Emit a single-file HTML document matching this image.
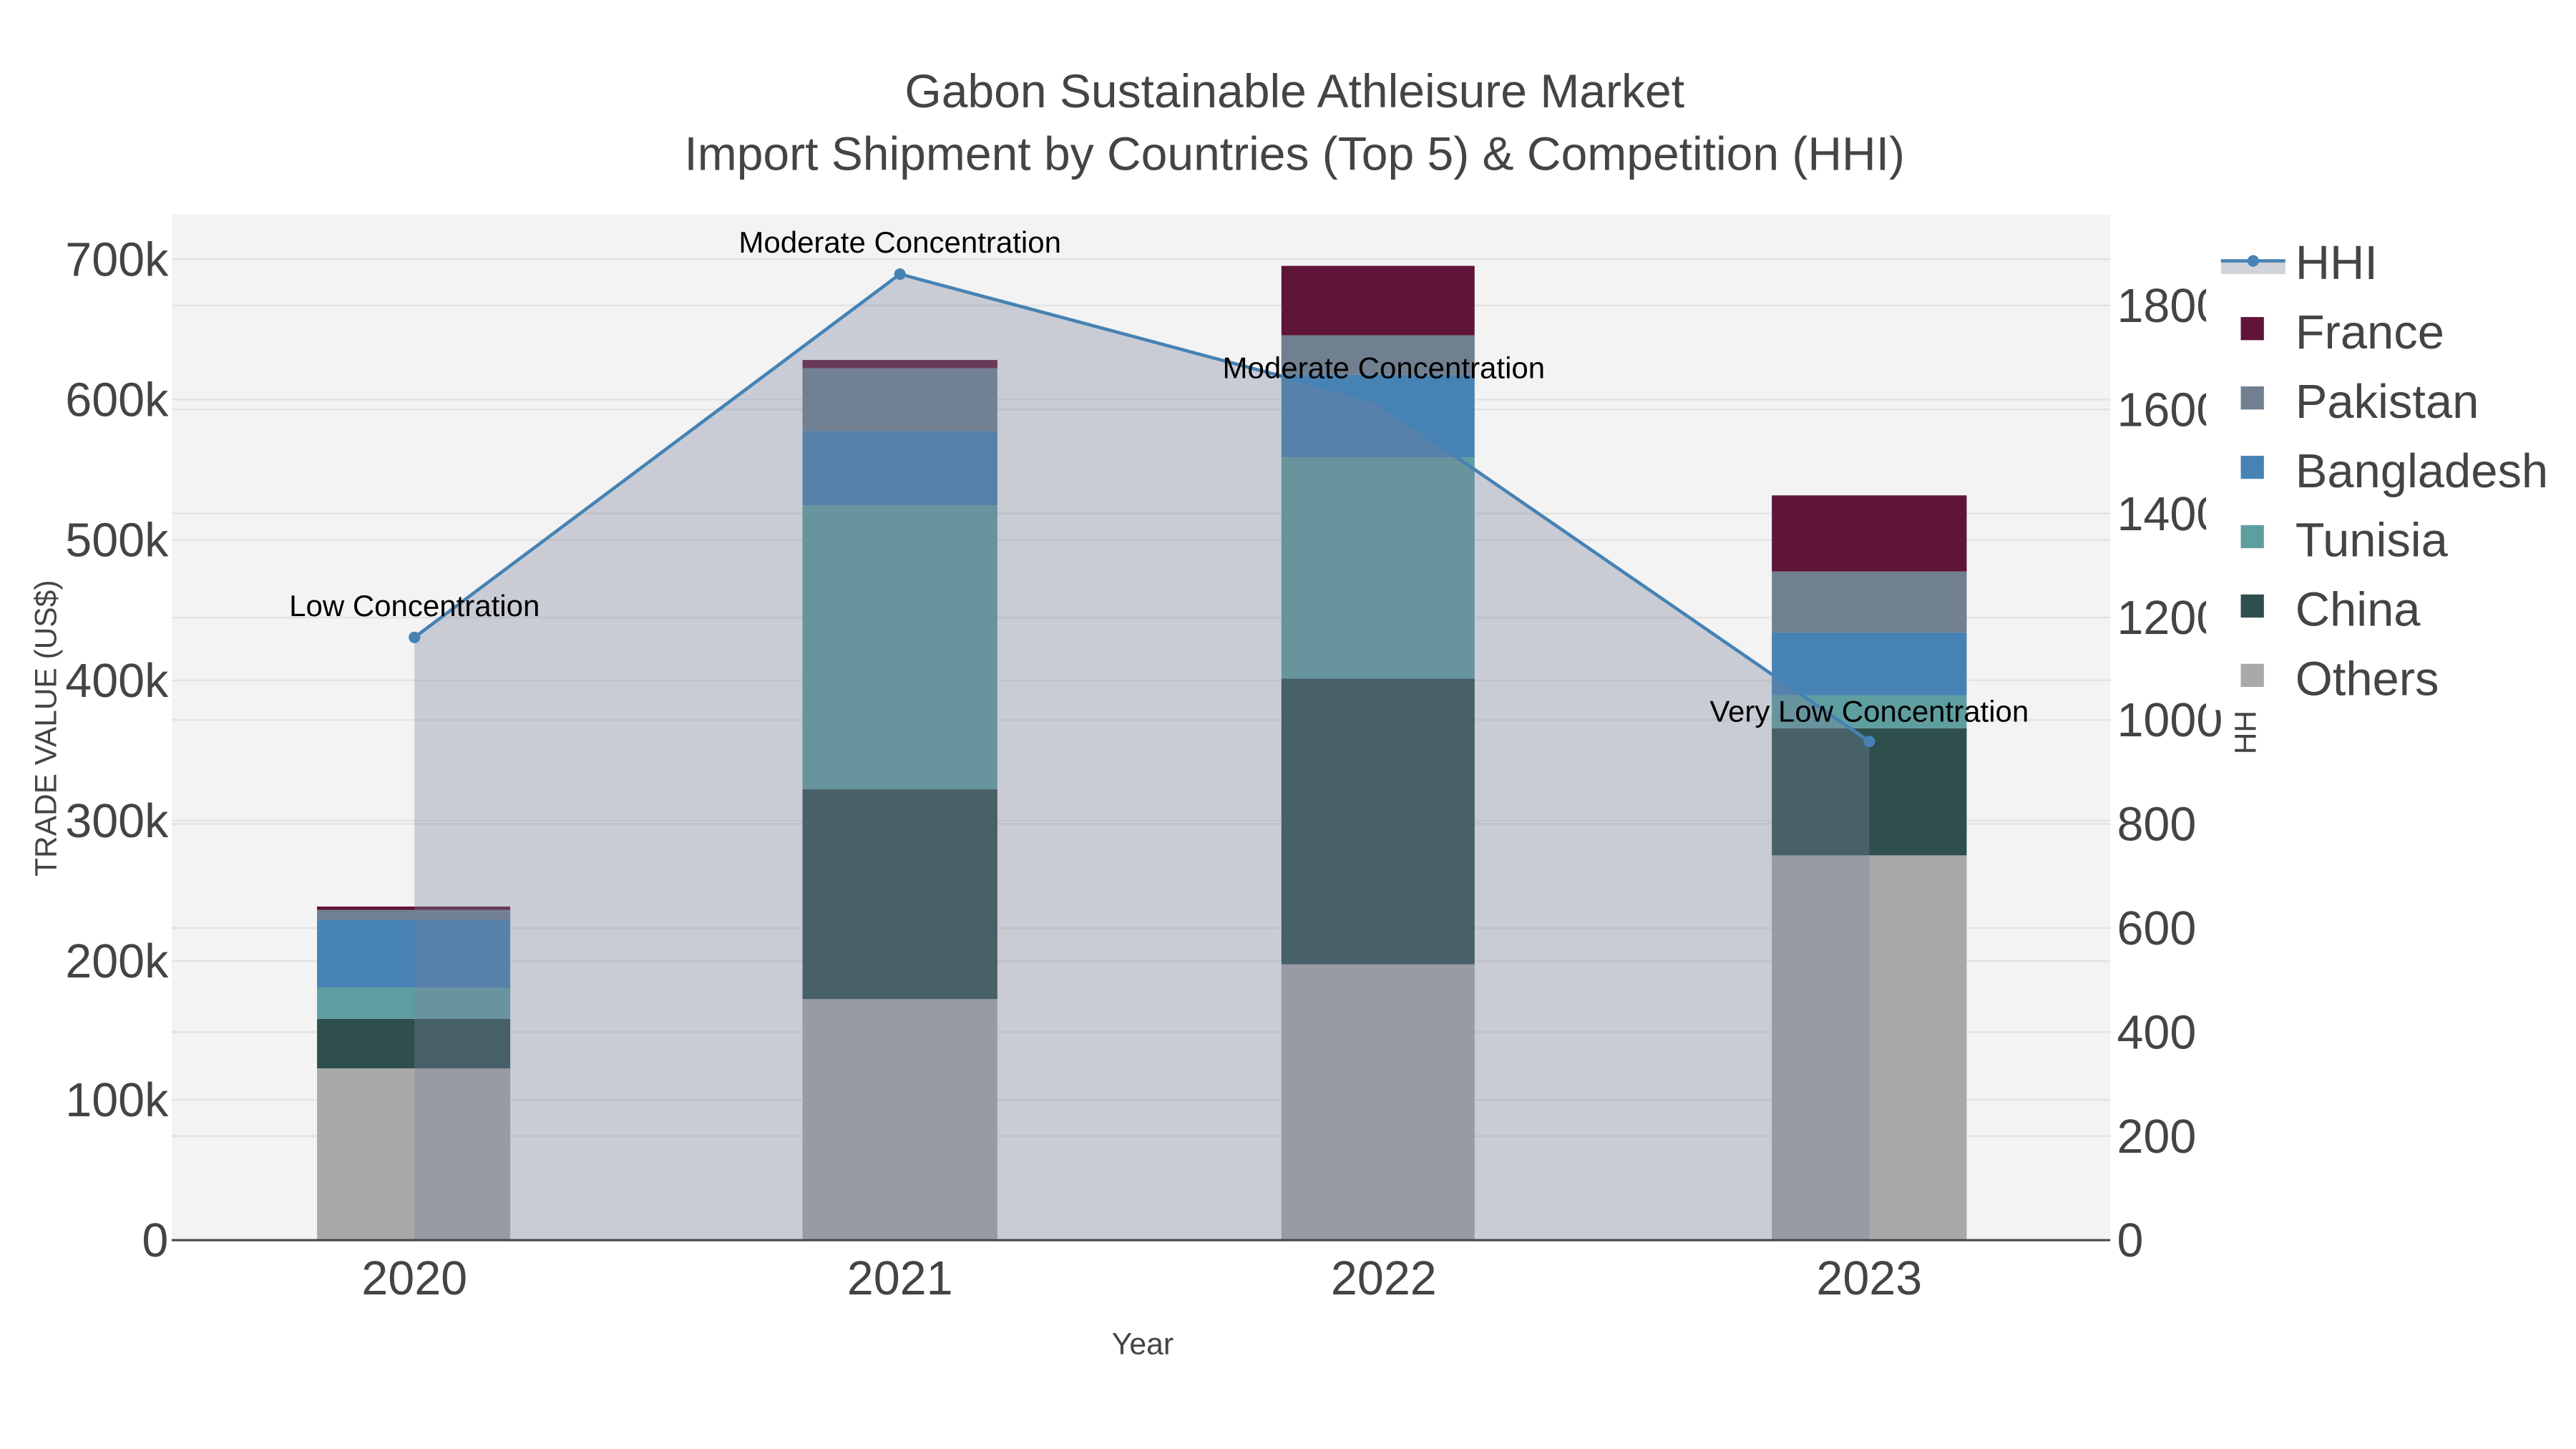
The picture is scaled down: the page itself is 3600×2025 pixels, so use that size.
<!DOCTYPE html>
<html><head><meta charset="utf-8"><style>
html,body{margin:0;padding:0;background:#fff;}
svg{display:block;}
text{font-family:"Liberation Sans",Arial,sans-serif;}
</style></head><body>
<svg width="3600" height="2025" viewBox="0 0 1560 877.5" xmlns="http://www.w3.org/2000/svg">
<rect width="1560" height="877.5" fill="#fff"/>
<rect x="104" y="130" width="1174" height="621" fill="#f3f3f3"/>
<g stroke="#e2e2e2" stroke-width="1">
<line x1="104" x2="1278" y1="666" y2="666"/><line x1="104" x2="1278" y1="582" y2="582"/>
<line x1="104" x2="1278" y1="497" y2="497"/><line x1="104" x2="1278" y1="412" y2="412"/>
<line x1="104" x2="1278" y1="327" y2="327"/><line x1="104" x2="1278" y1="242" y2="242"/>
<line x1="104" x2="1278" y1="157" y2="157"/>
<line x1="104" x2="1278" y1="688" y2="688"/><line x1="104" x2="1278" y1="625" y2="625"/>
<line x1="104" x2="1278" y1="562" y2="562"/><line x1="104" x2="1278" y1="499" y2="499"/>
<line x1="104" x2="1278" y1="436" y2="436"/><line x1="104" x2="1278" y1="374" y2="374"/>
<line x1="104" x2="1278" y1="311" y2="311"/><line x1="104" x2="1278" y1="248" y2="248"/>
<line x1="104" x2="1278" y1="185" y2="185"/>
</g>
<g>
<rect x="192" y="647" width="117" height="104" fill="#a9a9a9"/>
<rect x="192" y="617" width="117" height="30" fill="#2f4f4f"/>
<rect x="192" y="598" width="117" height="19" fill="#5f9ea0"/>
<rect x="192" y="557" width="117" height="41" fill="#4682b4"/>
<rect x="192" y="551" width="117" height="6" fill="#708090"/>
<rect x="192" y="549" width="117" height="2" fill="#601437"/>

<rect x="486" y="605" width="118" height="146" fill="#a9a9a9"/>
<rect x="486" y="478" width="118" height="127" fill="#2f4f4f"/>
<rect x="486" y="306" width="118" height="172" fill="#5f9ea0"/>
<rect x="486" y="261" width="118" height="45" fill="#4682b4"/>
<rect x="486" y="223" width="118" height="38" fill="#708090"/>
<rect x="486" y="218" width="118" height="5" fill="#601437"/>

<rect x="776" y="584" width="117" height="167" fill="#a9a9a9"/>
<rect x="776" y="411" width="117" height="173" fill="#2f4f4f"/>
<rect x="776" y="277" width="117" height="134" fill="#5f9ea0"/>
<rect x="776" y="227" width="117" height="50" fill="#4682b4"/>
<rect x="776" y="203" width="117" height="24" fill="#708090"/>
<rect x="776" y="161" width="117" height="42" fill="#601437"/>

<rect x="1073" y="518" width="118" height="233" fill="#a9a9a9"/>
<rect x="1073" y="441" width="118" height="77" fill="#2f4f4f"/>
<rect x="1073" y="421" width="118" height="20" fill="#5f9ea0"/>
<rect x="1073" y="383" width="118" height="38" fill="#4682b4"/>
<rect x="1073" y="346" width="118" height="37" fill="#708090"/>
<rect x="1073" y="300" width="118" height="46" fill="#601437"/>
</g>
<polygon points="251,751 251,386 545,166 833,243 1132,449 1132,751" fill="rgba(119,130,151,0.34)"/>
<polyline points="251,386 545,166 833,243 1132,449" fill="none" stroke="#4682b4" stroke-width="2"/>
<g fill="#4682b4"><circle cx="251" cy="386" r="3.5"/><circle cx="545" cy="166" r="3.5"/><circle cx="1132" cy="449" r="3.5"/></g>
<line x1="104" x2="1278" y1="751" y2="751" stroke="#444" stroke-width="1.3"/>
<g font-size="18.2" fill="#000" text-anchor="middle">
<text x="251" y="373">Low Concentration</text>
<text x="545" y="153">Moderate Concentration</text>
<text x="838" y="229">Moderate Concentration</text>
<text x="1132" y="437">Very Low Concentration</text>
</g>
<g font-size="28.8" fill="#444" text-anchor="end">
<text x="102" y="761">0</text><text x="102" y="676">100k</text><text x="102" y="592">200k</text>
<text x="102" y="507">300k</text><text x="102" y="422">400k</text><text x="102" y="337">500k</text>
<text x="102" y="252">600k</text><text x="102" y="167">700k</text>
</g>
<g font-size="28.8" fill="#444">
<text x="1282" y="761">0</text><text x="1282" y="698">200</text><text x="1282" y="635">400</text>
<text x="1282" y="572">600</text><text x="1282" y="509">800</text><text x="1282" y="446">1000</text>
<text x="1282" y="384">1200</text><text x="1282" y="321">1400</text><text x="1282" y="258">1600</text>
<text x="1282" y="195">1800</text>
</g>
<g font-size="28.8" fill="#444" text-anchor="middle">
<text x="251" y="784">2020</text><text x="545" y="784">2021</text><text x="838" y="784">2022</text><text x="1132" y="784">2023</text>
</g>
<text x="692" y="820" font-size="18.5" fill="#444" text-anchor="middle">Year</text>
<text transform="translate(34,441) rotate(-90)" font-size="18.4" fill="#444" text-anchor="middle">TRADE VALUE (US$)</text>
<text transform="translate(1366,441) rotate(-90)" font-size="18.4" fill="#444" text-anchor="middle">HHI</text>
<g font-size="28.6" fill="#444" text-anchor="middle">
<text x="784" y="65">Gabon Sustainable Athleisure Market</text>
<text x="784" y="103">Import Shipment by Countries (Top 5) &amp; Competition (HHI)</text>
</g>
<rect x="1336" y="150" width="280" height="280" fill="#fff"/>
<rect x="1345" y="159" width="39" height="7" fill="#d0d4da"/>
<line x1="1345" x2="1384" y1="158" y2="158" stroke="#4682b4" stroke-width="2"/>
<circle cx="1364.5" cy="158" r="3.5" fill="#4682b4"/>
<rect x="1357" y="192" width="14" height="14" fill="#601437"/>
<rect x="1357" y="234" width="14" height="14" fill="#708090"/>
<rect x="1357" y="276" width="14" height="14" fill="#4682b4"/>
<rect x="1357" y="318" width="14" height="14" fill="#5f9ea0"/>
<rect x="1357" y="360" width="14" height="14" fill="#2f4f4f"/>
<rect x="1357" y="402" width="14" height="14" fill="#a9a9a9"/>
<g font-size="29" fill="#444">
<text x="1390" y="169">HHI</text><text x="1390" y="211">France</text><text x="1390" y="253">Pakistan</text>
<text x="1390" y="295">Bangladesh</text><text x="1390" y="337">Tunisia</text><text x="1390" y="379">China</text>
<text x="1390" y="421">Others</text>
</g>
</svg>
</body></html>
